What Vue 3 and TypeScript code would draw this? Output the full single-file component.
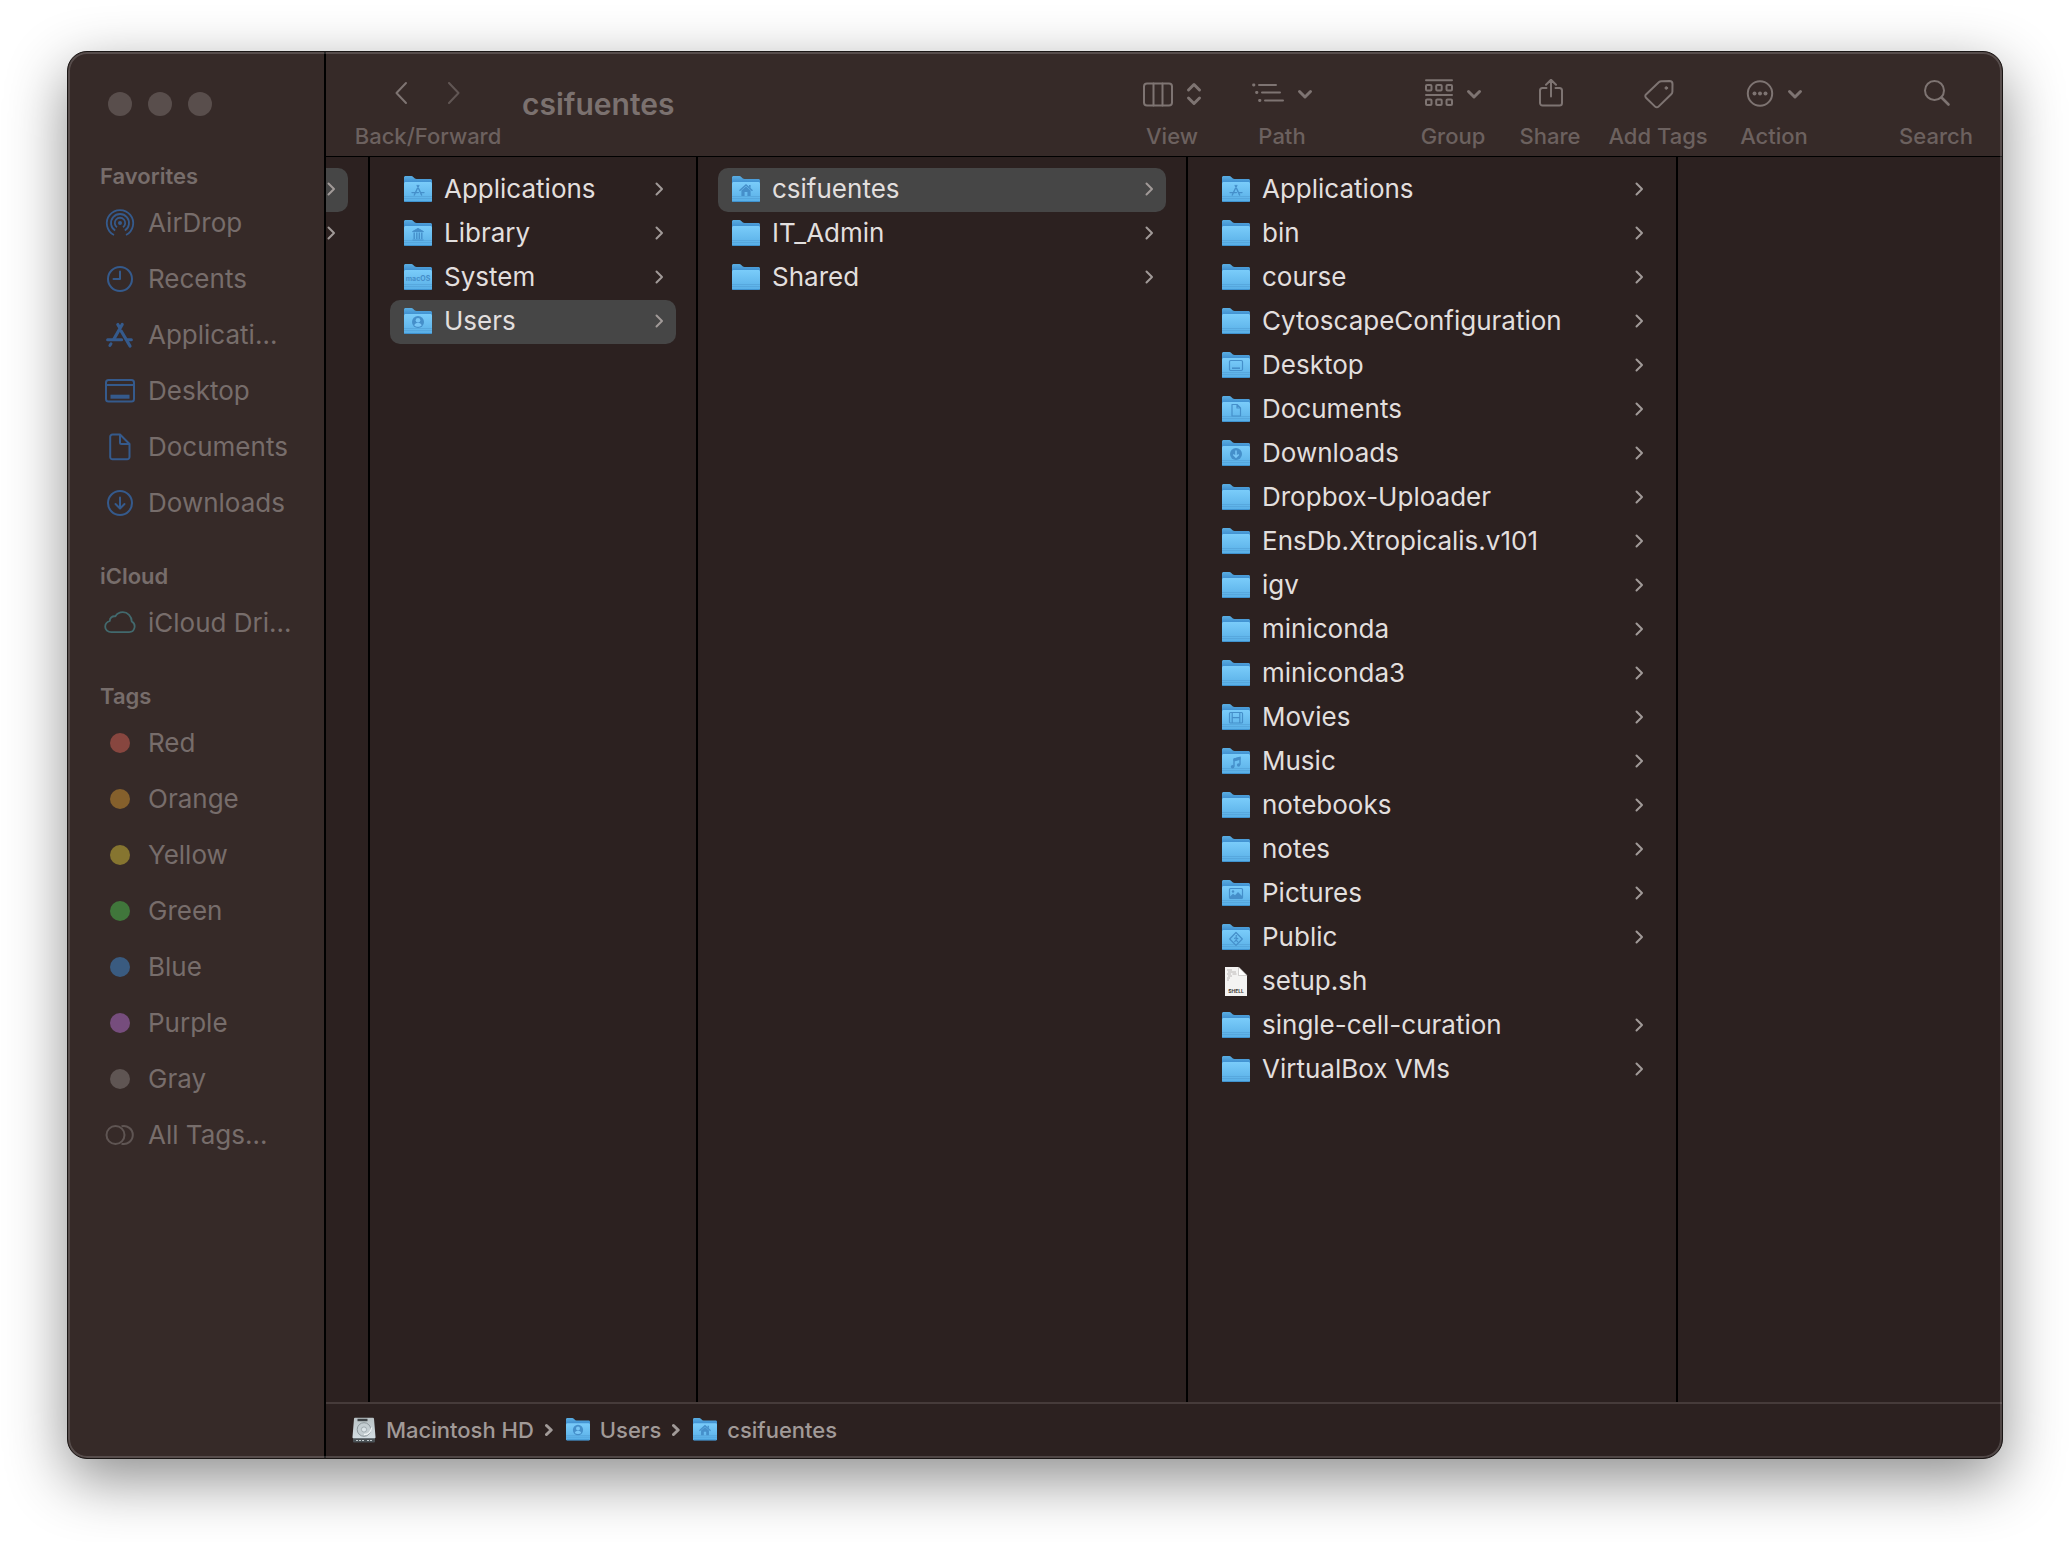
<script setup lang="ts">
import { ref } from 'vue'

interface Entry {
  name: string
  glyph?: string
  file?: boolean
}

interface Column {
  id: string
  label: string
  entries: Entry[]
  selected?: string
}

interface SidebarItem {
  name: string
  icon?: string
  tint?: string
  dot?: string
}

// Emblems embossed on the front of special folders (28 x 28 canvas)
const glyphs: Record<string, string> = {
  apps: '<path d="M14.8 9.5 10.3 19M13.2 9.5 17.6 19M8 16.6h6.4M17 16.6h3" stroke-width="1.4" stroke-linecap="round"/>',
  library:
    '<path d="M8.500 11.600 14 8.400l5.500 3.200zM8.500 20h11" stroke-width="1" fill="currentColor"/><path d="M10.200 12.500v6.500M12.800 12.500v6.500M15.300 12.500v6.500M17.800 12.500v6.500" stroke-width="1.400"/>',
  user: '<circle cx="14" cy="14" r="6" fill="currentColor" stroke="none"/><circle cx="14" cy="12.200" r="2.300" fill="#78c6f6" stroke="none"/><path d="M10.300 17.400c.6-3.400 6.800-3.400 7.400 0-2 1.800-5.400 1.800-7.400 0z" fill="#78c6f6" stroke="none"/>',
  home: '<path d="M7.500 14.800 14 9l6.500 5.800" stroke-width="1.500"/><path d="M9.400 14.600 14 10.600l4.600 4V20h-3.200v-4h-2.800v4H9.400zM17 9h1.600v3L17 10.600z" fill="currentColor" stroke="none"/>',
  desktop: '<rect x="7.500" y="8.500" width="13" height="10" rx="1.200" stroke-width="1.200"/><path d="M10 16.200h8" stroke-width="1.600"/>',
  document: '<path d="M10 8.500h5l3.500 3.500v8H10zM15 8.500V12h3.500" stroke-width="1.200" stroke-linejoin="round"/>',
  download:
    '<circle cx="14" cy="14" r="6" fill="currentColor" stroke="none"/><path d="M14 10.600v6.400M11.300 14.500l2.700 2.600 2.700-2.600" stroke="#78c6f6" stroke-width="1.500"/>',
  movie:
    '<rect x="7.500" y="8.500" width="13" height="10.500" rx="1" stroke-width="1.200"/><path d="M10.200 8.500v10.500M17.800 8.500v10.500M10.200 13.700h7.600" stroke-width="1.200"/>',
  music:
    '<path d="M12 18.600V11l6-1.600v7.400" stroke-width="1.400"/><path d="M12 11l6-1.600v2L12 13z" fill="currentColor"/><circle cx="10.600" cy="18.800" r="1.800" fill="currentColor" stroke="none"/><circle cx="16.600" cy="17" r="1.700" fill="currentColor" stroke="none"/>',
  picture:
    '<rect x="7.500" y="8.500" width="13" height="10" rx="1" stroke-width="1.200"/><path d="M8 18v-1.500l3-2.800 2 1.600 3-3.300 4.500 4.500V18z" fill="currentColor" stroke="none"/><circle cx="11" cy="11.500" r="1.200" fill="currentColor" stroke="none"/>',
  share:
    '<path d="M14 8.500 20.300 15 14 21.400 7.700 15z" stroke-width="1.200" stroke-linejoin="round"/><path d="M14.200 13.200v3l1.800 2M14.200 15.800 12.400 18M12 14.600l2.200-1 2 1.400" stroke-width="1.100"/><circle cx="14.300" cy="11.900" r=".9" fill="currentColor" stroke="none"/>',
  system:
    '<text x="14" y="17" text-anchor="middle" font-size="7" font-weight="700" fill="currentColor" stroke="none">macOS</text>',
}

// Line icons of the sidebar (32 x 28 canvas, centred on 16,14)
const sideIcons: Record<string, string> = {
  airdrop:
    '<circle cx="16" cy="14" r="2" fill="currentColor" stroke="none"/><path d="M13 18.200a5.200 5.200 0 1 1 6 0M11.200 21.600a9 9 0 1 1 9.600 0M10 26a13.200 13.200 0 1 1 12 0" stroke-width="1.800"/>',
  recents: '<circle cx="16" cy="14" r="12"/><path d="M16 6.500V14H9.500" stroke-linecap="round"/>',
  apps: '<path d="M18.200 3.500 9.800 18.300M13.800 3.500l1.800 3" stroke-width="3.200" stroke-linecap="round"/><path d="M17.300 10.200 26 25" stroke-width="3.200" stroke-linecap="round"/><path d="M3.600 18.800h14M23.600 18.800h3.800M7 22.800 5.900 24.500" stroke-width="3" stroke-linecap="round"/>',
  desktop:
    '<rect x="2" y="3" width="28" height="21.500" rx="2.500"/><path d="M2 8h28"/><path d="M6.500 19.700h19" stroke-width="4"/>',
  document: '<path d="M8.500 1.500H16l9.500 9.500v13a2.300 2.300 0 0 1-2.300 2.300H8.500A2.300 2.300 0 0 1 6.200 24V3.800a2.300 2.300 0 0 1 2.300-2.300zM16 2v7.500A1.500 1.500 0 0 0 17.500 11h7.500"/>',
  download: '<circle cx="16" cy="14" r="12"/><path d="M16 8.500v10.500M11.500 15l4.500 4.500 4.500-4.500" stroke-linecap="round"/>',
  cloud:
    '<path d="M7.200 23.200h18a5.700 5.700 0 0 0 2.600-10.600C27.600 7 23.600 3.200 18.800 3.200c-3.200 0-5.900 1.600-7.400 4.200-3-.7-5.700 1.400-5.600 4.600-2.800.9-4.600 3-4.600 5.700 0 3.100 2.700 5.500 6 5.500z" stroke-width="1.800"/>',
  tags: '<circle cx="11.500" cy="14" r="9"/><path d="M17.500 5.300a9 9 0 1 1 0 17.400" />',
}

const blue = '#355a8c'
const favorites: SidebarItem[] = [
  { name: 'AirDrop', icon: 'airdrop', tint: blue },
  { name: 'Recents', icon: 'recents', tint: blue },
  { name: 'Applicati…', icon: 'apps', tint: blue },
  { name: 'Desktop', icon: 'desktop', tint: blue },
  { name: 'Documents', icon: 'document', tint: blue },
  { name: 'Downloads', icon: 'download', tint: blue },
]
const tags: SidebarItem[] = [
  { name: 'Red', dot: '#87463f' },
  { name: 'Orange', dot: '#85602c' },
  { name: 'Yellow', dot: '#867530' },
  { name: 'Green', dot: '#40763b' },
  { name: 'Blue', dot: '#3a5b80' },
  { name: 'Purple', dot: '#764d7d' },
  { name: 'Gray', dot: '#5f5553' },
  { name: 'All Tags…', icon: 'tags', tint: '#5f5553' },
]
const sections = [
  { title: 'Favorites', items: favorites },
  { title: 'iCloud', items: [{ name: 'iCloud Dri…', icon: 'cloud', tint: '#42696d' }] as SidebarItem[] },
  { title: 'Tags', items: tags },
]

const columns = ref<Column[]>([
  {
    id: 'disk',
    label: 'Macintosh HD',
    selected: 'Users',
    entries: [
      { name: 'Applications', glyph: 'apps' },
      { name: 'Library', glyph: 'library' },
      { name: 'System', glyph: 'system' },
      { name: 'Users', glyph: 'user' },
    ],
  },
  {
    id: 'users',
    label: 'Users',
    selected: 'csifuentes',
    entries: [{ name: 'csifuentes', glyph: 'home' }, { name: 'IT_Admin' }, { name: 'Shared' }],
  },
  {
    id: 'home',
    label: 'csifuentes',
    entries: [
      { name: 'Applications', glyph: 'apps' },
      { name: 'bin' },
      { name: 'course' },
      { name: 'CytoscapeConfiguration' },
      { name: 'Desktop', glyph: 'desktop' },
      { name: 'Documents', glyph: 'document' },
      { name: 'Downloads', glyph: 'download' },
      { name: 'Dropbox-Uploader' },
      { name: 'EnsDb.Xtropicalis.v101' },
      { name: 'igv' },
      { name: 'miniconda' },
      { name: 'miniconda3' },
      { name: 'Movies', glyph: 'movie' },
      { name: 'Music', glyph: 'music' },
      { name: 'notebooks' },
      { name: 'notes' },
      { name: 'Pictures', glyph: 'picture' },
      { name: 'Public', glyph: 'share' },
      { name: 'setup.sh', file: true },
      { name: 'single-cell-curation' },
      { name: 'VirtualBox VMs' },
    ],
  },
])

const crumbs = [
  { name: 'Macintosh HD', kind: 'disk' },
  { name: 'Users', kind: 'user' },
  { name: 'csifuentes', kind: 'home' },
]
</script>

<template>
  <main class="desk">
    <svg class="defs" width="0" height="0" aria-hidden="true">
      <defs>
        <linearGradient id="folderBack" x1="0" y1="0" x2="0" y2="1">
          <stop offset="0" stop-color="#5aaee2" />
          <stop offset="0.25" stop-color="#3f8fd0" />
          <stop offset="1" stop-color="#3f8fd0" />
        </linearGradient>
        <linearGradient id="folderFront" x1="0" y1="0" x2="0" y2="1">
          <stop offset="0" stop-color="#7accfa" />
          <stop offset="1" stop-color="#58aee6" />
        </linearGradient>
        <linearGradient id="diskTop" x1="0" y1="0" x2="0" y2="1">
          <stop offset="0" stop-color="#b9c2c5" />
          <stop offset="1" stop-color="#d3dde2" />
        </linearGradient>
        <g id="folder">
          <path d="M0 3V1.500C0 .7.7 0 1.500 0H7.500C9.500 0 10 3 12.500 3H26.500C27.300 3 28 3.700 28 4.500V24.500c0 .8-.7 1.500-1.500 1.500h-25C.7 26 0 25.300 0 24.500z" fill="url(#folderBack)" />
          <path d="M0 7.500C0 6.700.7 6 1.500 6h25c.8 0 1.500.7 1.500 1.500v17c0 .8-.7 1.500-1.500 1.500h-25C.7 26 0 25.300 0 24.500z" fill="url(#folderFront)" />
          <path d="M0 20.500h28M0 22.500h28" stroke="#529fd6" stroke-width="1" opacity="0.6" />
          <path d="M1 25.500h26" stroke="#3f92cf" stroke-width="1" />
        </g>
      </defs>
    </svg>

    <div class="window">
      <nav class="sidebar" aria-label="Sidebar">
        <div class="lights">
          <button aria-label="Close"></button>
          <button aria-label="Minimize"></button>
          <button aria-label="Zoom"></button>
        </div>
        <section v-for="s in sections" :key="s.title">
          <h2>{{ s.title }}</h2>
          <ul>
            <li v-for="item in s.items" :key="item.name">
              <button class="place">
                <span class="place-icon">
                  <svg v-if="item.icon" width="32" height="28" viewBox="0 0 32 28" :style="{ color: item.tint }" fill="none" stroke="currentColor" stroke-width="2" stroke-linejoin="round" aria-hidden="true">
                    <g v-html="sideIcons[item.icon]" />
                  </svg>
                  <i v-else class="dot" :style="{ background: item.dot }"></i>
                </span>
                <span>{{ item.name }}</span>
              </button>
            </li>
          </ul>
        </section>
      </nav>

      <div class="content">
        <header class="toolbar">
          <div class="tool nav-tool">
            <div class="tool-icons nav-icons">
              <button aria-label="Back">
                <svg width="16" height="28" viewBox="0 0 16 28"><path d="M12 4 2.500 14 12 24" class="line" /></svg>
              </button>
              <button class="dim" aria-label="Forward">
                <svg width="16" height="28" viewBox="0 0 16 28"><path d="M3 4l9.500 10L3 24" class="line" /></svg>
              </button>
            </div>
            <span class="tool-label">Back/Forward</span>
          </div>
          <h1>csifuentes</h1>

          <button class="tool view">
            <span class="tool-icons">
              <svg width="30" height="30" viewBox="0 0 30 30" class="line"><rect x="1" y="4.500" width="28" height="22" rx="3" /><path d="M10.500 4.500v22M19.500 4.500v22" /></svg>
              <svg width="18" height="30" viewBox="0 0 18 30" class="line bold"><path d="M3.500 11 9 5.500l5.500 5.500M3.500 19l5.500 5.500 5.500-5.500" /></svg>
            </span>
            <span class="tool-label">View</span>
          </button>
          <button class="tool path">
            <span class="tool-icons">
              <svg width="32" height="30" viewBox="0 0 32 30" class="line"><path d="M7 6h17M10 13.500h18M13 21.500h18" /><path d="M1.500 6h.5M4.500 13.500h.5M7.500 21.500h.5" stroke-width="2.800" /></svg>
              <svg width="18" height="30" viewBox="0 0 18 30" class="line bold"><path d="M3.500 12.500 9 18l5.500-5.500" /></svg>
            </span>
            <span class="tool-label">Path</span>
          </button>
          <button class="tool group">
            <span class="tool-icons">
              <svg width="28" height="30" viewBox="0 0 28 30" class="line"><path d="M1 1.200h26M1 16h26" /><rect x="1" y="6" width="5.500" height="5.500" rx="1" /><rect x="11.200" y="6" width="5.500" height="5.500" rx="1" /><rect x="21.500" y="6" width="5.500" height="5.500" rx="1" /><rect x="1" y="20.500" width="5.500" height="5.500" rx="1" /><rect x="11.200" y="20.500" width="5.500" height="5.500" rx="1" /><rect x="21.500" y="20.500" width="5.500" height="5.500" rx="1" /></svg>
              <svg width="18" height="30" viewBox="0 0 18 30" class="line bold"><path d="M3.500 12.500 9 18l5.500-5.500" /></svg>
            </span>
            <span class="tool-label">Group</span>
          </button>
          <button class="tool share">
            <span class="tool-icons">
              <svg width="24" height="30" viewBox="0 0 24 30" class="line"><path d="M7.500 9H3.500A2.500 2.500 0 0 0 1 11.500v12.500A2.500 2.500 0 0 0 3.500 26.500h17a2.500 2.500 0 0 0 2.500-2.500V11.500A2.500 2.500 0 0 0 20.500 9h-4M12 17.500V1M7 5.700l5-4.900 5 4.900" /></svg>
            </span>
            <span class="tool-label">Share</span>
          </button>
          <button class="tool add-tags">
            <span class="tool-icons">
              <svg width="30" height="30" viewBox="0 0 30 30" class="line"><path d="M17.500 2.200l8-.2a3 3 0 0 1 3 3l-.1 7.500a4 4 0 0 1-1.200 2.800L14.500 27.600a2.400 2.400 0 0 1-3.400 0L2 18.800a2.400 2.400 0 0 1 0-3.400L14.800 3.300a4 4 0 0 1 2.700-1.100z" /><circle cx="22.300" cy="9" r="1.300" fill="currentColor" stroke-width="1" /></svg>
            </span>
            <span class="tool-label">Add Tags</span>
          </button>
          <button class="tool action">
            <span class="tool-icons">
              <svg width="28" height="30" viewBox="0 0 28 30" class="line"><circle cx="14" cy="14.500" r="12.200" /><g fill="currentColor" stroke="none"><circle cx="8.500" cy="14.500" r="2" /><circle cx="14" cy="14.500" r="2" /><circle cx="19.500" cy="14.500" r="2" /></g></svg>
              <svg width="18" height="30" viewBox="0 0 18 30" class="line bold"><path d="M3.500 12.500 9 18l5.500-5.500" /></svg>
            </span>
            <span class="tool-label">Action</span>
          </button>
          <button class="tool search">
            <span class="tool-icons">
              <svg width="28" height="30" viewBox="0 0 28 30" class="line"><circle cx="11.500" cy="11.500" r="9.500" /><path d="M18.500 18.500l7 7" stroke-width="2.600" /></svg>
            </span>
            <span class="tool-label">Search</span>
          </button>
        </header>

        <div class="browser">
          <ul class="column clipped" aria-label="Locations">
            <li v-for="n in 2" :key="n">
              <button class="row" :class="{ selected: n === 1 }" aria-label="Open location">
                <svg class="chevron" width="10" height="16" viewBox="0 0 10 16"><path d="M2.500 2.500 8 8l-5.500 5.500" /></svg>
              </button>
            </li>
          </ul>
          <ul v-for="col in columns" :key="col.id" class="column" :class="col.id" :aria-label="col.label">
            <li v-for="e in col.entries" :key="e.name">
              <button class="row" :class="{ selected: e.name === col.selected }" @click="col.selected = e.name">
                <svg v-if="e.file" class="icon" width="28" height="30" viewBox="0 0 28 30" aria-hidden="true">
                  <path d="M3 0h13.500L25 8.500V29H3z" fill="#f4f3f2" />
                  <path d="M16.500 0 25 8.500h-8.500z" fill="#ffffff" stroke="#b9b6b4" stroke-width="0.600" />
                  <path d="M5 3h5M6 5h8M5 7h4M10.500 7h4M6 9h4M5 11h3M5 13h2" stroke="#b5b2b0" stroke-width="0.900" />
                  <text x="14" y="26" text-anchor="middle" font-size="5" font-weight="700" fill="#3d3a39">SHELL</text>
                </svg>
                <svg v-else class="icon" width="28" height="28" viewBox="0 0 28 28" aria-hidden="true">
                  <use href="#folder" />
                  <g v-if="e.glyph" class="glyph" v-html="glyphs[e.glyph]" />
                </svg>
                <span class="name">{{ e.name }}</span>
                <svg v-if="!e.file" class="chevron" width="10" height="16" viewBox="0 0 10 16" aria-hidden="true"><path d="M2.500 2.500 8 8l-5.500 5.500" /></svg>
              </button>
            </li>
          </ul>
        </div>

        <footer class="pathbar">
          <template v-for="(c, i) in crumbs" :key="c.name">
            <svg v-if="i > 0" class="sep" width="10" height="14" viewBox="0 0 10 14" aria-hidden="true"><path d="M1.500 2.500 6.200 7l-4.700 4.500" /></svg>
            <button class="crumb">
              <svg v-if="c.kind === 'disk'" width="24" height="26" viewBox="0 0 24 26" aria-hidden="true">
                <path d="M1 20h22v4.500a1 1 0 0 1-1 1H2a1 1 0 0 1-1-1z" fill="#4a5155" />
                <path d="M3 .8h18a1 1 0 0 1 1 .9L23.500 20a1 1 0 0 1-1 1.200h-21a1 1 0 0 1-1-1.200L2 1.700a1 1 0 0 1 1-.9z" fill="url(#diskTop)" />
                <path d="M5.500 3h10" stroke="#3e4346" stroke-width="2.400" />
                <circle cx="12" cy="12.500" r="6.800" fill="#c4ced2" stroke="#8d979c" stroke-width="1" />
                <circle cx="12" cy="12.500" r="2.600" fill="#dbe4e8" stroke="#98a2a7" stroke-width="0.800" />
                <path d="M12 17.500c5 0 7-2.500 7.500-7" fill="none" stroke="#eef3f5" stroke-width="1.400" />
                <path d="M4 23.500h8M15 23.500h5" stroke="#c0c8cb" stroke-width="1.200" stroke-dasharray="2 1" />
              </svg>
              <svg v-else width="24" height="24" viewBox="0 0 28 28" aria-hidden="true">
                <use href="#folder" />
                <g class="glyph" v-html="glyphs[c.kind]" />
              </svg>
              <span>{{ c.name }}</span>
            </button>
          </template>
        </footer>
      </div>
    </div>
  </main>
</template>

<style>
body {
  background: #ffffff;
}
</style>

<style scoped>
.desk {
  box-sizing: border-box;
  display: flex;
  min-height: 100vh;
  padding: 51px 67px 83px;
  font-family: Inter, 'Liberation Sans', sans-serif;
  font-size: 26px;
  line-height: 32px;
}

.defs {
  position: absolute;
}

button {
  margin: 0;
  padding: 0;
  border: 0;
  background: none;
  color: inherit;
  font: inherit;
  text-align: left;
}

ul {
  margin: 0;
  padding: 0;
  list-style: none;
}

.window {
  position: relative;
  flex: 1;
  display: flex;
  min-width: 0;
  overflow: hidden;
  border: 1px solid #1a1615;
  border-radius: 20px;
  background: #2c2120;
  box-shadow: 0 20px 60px rgba(0, 0, 0, 0.45);
}

/* Light rim drawn over the window's edge */
.window::after {
  content: '';
  position: absolute;
  inset: 0;
  border-radius: 19px;
  box-shadow: inset 0 0 0 2px rgba(255, 255, 255, 0.17);
  pointer-events: none;
}

.sidebar {
  flex: none;
  width: 256px;
  border-right: 2px solid #000000;
  background: #362a28;
  color: #776d6b;
}

.lights {
  display: flex;
  gap: 16px;
  padding: 40px 0 3px 40px;
}

.lights button {
  width: 24px;
  height: 24px;
  border-radius: 50%;
  background: #594e4c;
}

.sidebar h2 {
  margin: 0;
  padding: 29px 0 3px 32px;
  font-size: 22px;
  font-weight: 600;
  line-height: 32px;
}

.lights + section h2 {
  padding-top: 41px;
}

.place {
  display: flex;
  align-items: center;
  gap: 12px;
  width: 100%;
  height: 56px;
  padding-left: 36px;
  white-space: nowrap;
}

.place-icon {
  display: flex;
  justify-content: center;
  width: 32px;
}

.dot {
  width: 20px;
  height: 20px;
  border-radius: 50%;
}

.content {
  flex: 1;
  display: flex;
  flex-direction: column;
  min-width: 0;
}

.toolbar {
  box-sizing: border-box;
  display: flex;
  align-items: flex-start;
  height: 105px;
  padding: 21px 30px 0 28px;
  border-bottom: 1px solid #000000;
  background: #362a28;
  color: #7e7472;
}

.tool {
  display: flex;
  flex: none;
  flex-direction: column;
  align-items: center;
}

.tool-icons {
  box-sizing: border-box;
  display: flex;
  align-items: flex-start;
  justify-content: center;
  gap: 12px;
  height: 47px;
  padding: 6px 0 0 2px;
}

.tool-label {
  color: #6c615f;
  font-size: 22px;
  font-weight: 500;
  line-height: 32px;
  white-space: nowrap;
}

.nav-tool {
  width: 148px;
}

.nav-icons {
  gap: 36px;
  padding-left: 0;
}

.nav-icons button {
  display: flex;
}

.dim {
  opacity: 0.6;
}

.line {
  fill: none;
  stroke: currentColor;
  stroke-width: 2;
  stroke-linecap: round;
  stroke-linejoin: round;
}

.bold {
  stroke-width: 3;
}

h1 {
  flex: 1;
  margin: 0;
  padding: 11px 0 0 20px;
  color: #7b716f;
  font-size: 30px;
  font-weight: 600;
  line-height: 40px;
}

.view,
.path {
  width: 60px;
}

.path {
  margin: 0 104px 0 50px;
}

.group {
  width: 74px;
  margin-right: 28px;
}

.share {
  width: 64px;
  margin-right: 28px;
}

.add-tags {
  width: 96px;
  margin-right: 28px;
}

.action {
  width: 80px;
  margin-right: 86px;
}

.search {
  width: 72px;
}

.browser {
  flex: 1;
  display: flex;
  min-height: 0;
}

.column {
  box-sizing: border-box;
  flex: none;
  padding: 11px 20px 20px;
  border-right: 2px solid #000000;
}

.clipped {
  width: 44px;
  padding-left: 0;
}

.clipped .row {
  padding-left: 0;
  border-radius: 0 10px 10px 0;
}

.disk {
  width: 328px;
}

.users,
.home {
  width: 490px;
}

.row {
  display: flex;
  align-items: center;
  width: 100%;
  height: 44px;
  padding: 0 12px 0 14px;
  border-radius: 10px;
  color: #e2dfde;
}

.row.selected {
  background: #464646;
}

.icon {
  flex: none;
  margin-right: 12px;
}

.name {
  flex: 1;
  padding-bottom: 2px;
  white-space: nowrap;
}

.glyph {
  color: #458fca;
  fill: none;
  stroke: currentColor;
}

.chevron,
.sep {
  flex: none;
  fill: none;
  stroke: #a19a98;
  stroke-width: 2;
  stroke-linecap: round;
  stroke-linejoin: round;
}

.chevron {
  margin-bottom: 2px;
}

.pathbar {
  display: flex;
  align-items: center;
  gap: 11px;
  height: 52px;
  padding: 0 24px 2px 26px;
  border-top: 2px solid #463b3a;
  color: #a19a98;
  font-size: 22px;
  font-weight: 500;
}

.sep {
  stroke-width: 3;
}

.crumb {
  display: flex;
  align-items: center;
  gap: 10px;
}
</style>
